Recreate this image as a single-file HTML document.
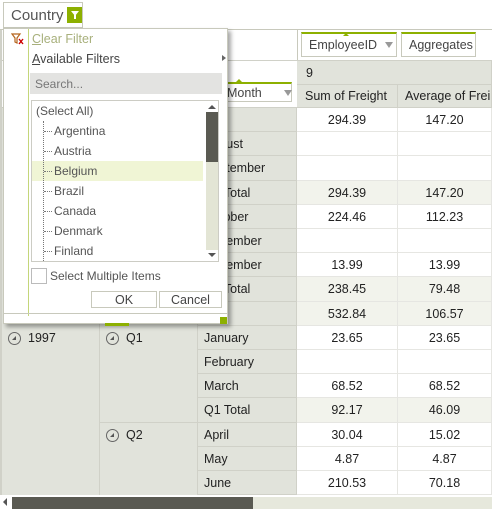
<!DOCTYPE html>
<html><head><meta charset="utf-8"><style>
*{box-sizing:border-box;margin:0;padding:0}
body{width:492px;height:509px;overflow:hidden;background:#fff;font-family:"Liberation Sans",sans-serif;font-size:12.5px;color:#222;position:relative}
.a{position:absolute}
.g{background:#e1e3db}
.c{position:absolute;display:flex;align-items:center;border-right:1px solid #d0d1c8;border-bottom:1px solid #d0d1c8;white-space:nowrap}
.n{justify-content:center;background:#fff;border-right:1px solid #e6e6e2;border-bottom:1px solid #e6e6e2}
.t{background:#f2f3ec}
.ex{display:inline-block;width:13px;height:13px;border:1px solid #666;border-radius:50%;margin-right:7px;position:relative}
.ex:after{content:"";position:absolute;left:3px;top:3px;border-left:4px solid transparent;border-bottom:4px solid #555}
.btn{position:absolute;border:1px solid #c8c9bc;background:#fff;display:flex;align-items:center;color:#444;font-size:12.5px;white-space:nowrap}
.li{position:absolute;left:0;height:20px;line-height:20px;color:#555;font-size:12px}
</style></head><body>
<div class="a" style="left:0;top:29px;width:492px;height:1px;background:#c8c9bc"></div>
<div class="btn" style="left:3px;top:2px;width:80px;height:26px;font-size:15px;padding-left:7px;color:#555">Country<span style="display:inline-block;width:16px;height:16px;background:#8db000;margin-left:3px;position:relative"><span style="position:absolute;left:4px;top:4px;border-left:4px solid transparent;border-right:4px solid transparent;border-top:5px solid #fff"></span><span style="position:absolute;left:7px;top:8px;width:2px;height:4px;background:#fff"></span></span></div>
<div class="a" style="left:0;top:30px;width:2px;height:479px;background:#d0d1c8"></div>
<div class="a" style="left:297px;top:30px;width:1px;height:30px;background:#c8c9bc"></div>
<div class="btn" style="left:301px;top:32px;width:96px;height:25px;border-top:2px solid #8db000;padding-left:7px">EmployeeID<span style="margin-left:8px;border-left:4px solid transparent;border-right:4px solid transparent;border-top:6px solid #999"></span></div>
<div class="a" style="left:343px;top:33px;border-left:3px solid transparent;border-right:3px solid transparent;border-bottom:3px solid #8db000"></div>
<div class="btn" style="left:401px;top:32px;width:75px;height:25px;border-top:2px solid #8db000;padding-left:7px">Aggregates</div>
<div class="a" style="left:0;top:60px;width:492px;height:1px;background:#d0d1c8"></div>
<div class="btn" style="left:200px;top:82px;width:92px;height:20px;border-top:2px solid #8db000;padding-left:26px">Month<span style="margin-left:22px;border-left:4px solid transparent;border-right:4px solid transparent;border-top:6px solid #999"></span></div>
<div class="a" style="left:236px;top:79px;border-left:3px solid transparent;border-right:3px solid transparent;border-bottom:3px solid #8db000"></div>
<div class="c g" style="left:297px;top:61px;width:195px;height:24px;padding-left:9px">9</div>
<div class="c g" style="left:297px;top:85px;width:101px;height:23px;padding-left:8px">Sum of Freight</div>
<div class="c g" style="left:398px;top:85px;width:94px;height:23px;padding-left:7px;overflow:hidden">Average of Frei</div>
<div class="a" style="left:0;top:107px;width:297px;height:2px;background:#d0d1c8"></div>
<div class="a g" style="left:2px;top:108px;width:98px;height:387px;border-right:1px solid #d0d1c8"></div>
<div class="a g" style="left:100px;top:108px;width:98px;height:387px;border-right:1px solid #d0d1c8"></div>
<div class="a" style="left:100px;top:422px;width:98px;height:1px;background:#d0d1c8"></div>
<div class="a" style="left:8px;top:331px;display:flex;align-items:center"><span class="ex"></span>1997</div>
<div class="a" style="left:106px;top:331px;display:flex;align-items:center"><span class="ex"></span>Q1</div>
<div class="a" style="left:106px;top:428px;display:flex;align-items:center"><span class="ex"></span>Q2</div>
<div id="rows"></div>
<script>
var R=[["July","294.39","147.20",0],["August","","",0],["September","","",0],["Q3 Total","294.39","147.20",1],["October","224.46","112.23",0],["November","","",0],["December","13.99","13.99",0],["Q4 Total","238.45","79.48",1],["","532.84","106.57",1],["January","23.65","23.65",0],["February","","",0],["March","68.52","68.52",0],["Q1 Total","92.17","46.09",1],["April","30.04","15.02",0],["May","4.87","4.87",0],["June","210.53","70.18",0]];
var h="";R.forEach(function(r,i){var t=Math.round(108+i*24.2),hh=Math.round(108+(i+1)*24.2)-t;
h+='<div class="c g" style="left:198px;top:'+t+'px;width:99px;height:'+hh+'px;padding-left:6px">'+r[0]+'</div>';
h+='<div class="c n'+(r[3]?' t':'')+'" style="left:297px;top:'+t+'px;width:101px;height:'+hh+'px">'+r[1]+'</div>';
h+='<div class="c n'+(r[3]?' t':'')+'" style="left:398px;top:'+t+'px;width:94px;height:'+hh+'px">'+r[2]+'</div>';});
document.getElementById("rows").innerHTML=h;
</script>
<div class="a" style="left:0;top:495px;width:492px;height:14px;background:#fff"></div>
<div class="a" style="left:3px;top:498px;border-top:4px solid transparent;border-bottom:4px solid transparent;border-right:4px solid #555"></div>
<div class="a" style="left:12px;top:497px;width:480px;height:12px;background:#e6e8dc"></div>
<div class="a" style="left:12px;top:497px;width:241px;height:12px;background:#5a5a52"></div>
<div class="a" style="left:3px;top:28px;width:225px;height:296px;background:#fff;border:1px solid #c8c9bc;box-shadow:3px 3px 4px rgba(0,0,0,.35)">
 <div class="a" style="left:24px;top:0;width:1px;height:287px;background:#c4d67a"></div>
 <svg class="a" style="left:7px;top:4px" width="14" height="12"><path d="M1 1H9L6 5V10L4 9V5Z" fill="none" stroke="#b5651d" stroke-width="1.2"/><path d="M8 6L12 11M12 6L8 11" stroke="#c00" stroke-width="1.4"/></svg>
 <div class="a" style="left:28px;top:3px;color:#a8b07c;font-size:12.5px"><u>C</u>lear Filter</div>
 <div class="a" style="left:28px;top:23px;color:#444;font-size:12.5px"><u>A</u>vailable Filters</div>
 <div class="a" style="left:218px;top:26px;border-top:3px solid transparent;border-bottom:3px solid transparent;border-left:4px solid #666"></div>
 <div class="a" style="left:26px;top:44px;width:192px;height:21px;background:#e3e3e1;color:#777;padding:4px 5px;font-size:12px">Search...</div>
 <div class="a" style="left:27px;top:71px;width:188px;height:162px;border:1px solid #ccccc4;overflow:hidden">
  <div class="a" style="left:0;top:60px;width:171px;height:20px;background:#f0f5d5"></div>
  <div class="li" style="left:4px;top:0">(Select All)</div>
  <div class="a" style="left:11px;top:20px;height:142px;border-left:1px dotted #777"></div>
  <div id="lst"></div>
  <div class="a" style="left:174px;top:0;width:13px;height:162px;background:#fff"></div>
  <div class="a" style="left:174px;top:11px;width:12px;height:138px;background:#e3e5d5"></div>
  <div class="a" style="left:174px;top:11px;width:12px;height:50px;background:#5a5a52"></div>
  <div class="a" style="left:176px;top:4px;border-left:4px solid transparent;border-right:4px solid transparent;border-bottom:4px solid #555"></div>
  <div class="a" style="left:176px;top:152px;border-left:4px solid transparent;border-right:4px solid transparent;border-top:4px solid #555"></div>
 </div>
 <div class="a" style="left:27px;top:239px;width:16px;height:16px;border:1px solid #bbb"></div>
 <div class="a" style="left:46px;top:240px;color:#555;font-size:12px">Select Multiple Items</div>
 <div class="btn" style="left:87px;top:262px;width:66px;height:17px;justify-content:center">OK</div>
 <div class="btn" style="left:155px;top:262px;width:63px;height:17px;justify-content:center">Cancel</div>
 <div class="a" style="left:0;top:284px;width:223px;height:1px;background:#c8c9bc"></div>
 <div class="a" style="left:101px;top:294px;width:24px;height:3px;background:#8db000"></div>
 <div class="a" style="left:216px;top:288px;width:7px;height:7px;background:#8db000"></div>
</div>
<script>
var L=["Argentina","Austria","Belgium","Brazil","Canada","Denmark","Finland"],s="";
L.forEach(function(n,i){var t=20+i*20;s+='<div class="a" style="left:12px;top:'+(t+10)+'px;width:8px;border-top:1px dotted #777"></div><div class="li" style="left:22px;top:'+t+'px">'+n+'</div>';});
document.getElementById("lst").innerHTML=s;
</script>
</body></html>
